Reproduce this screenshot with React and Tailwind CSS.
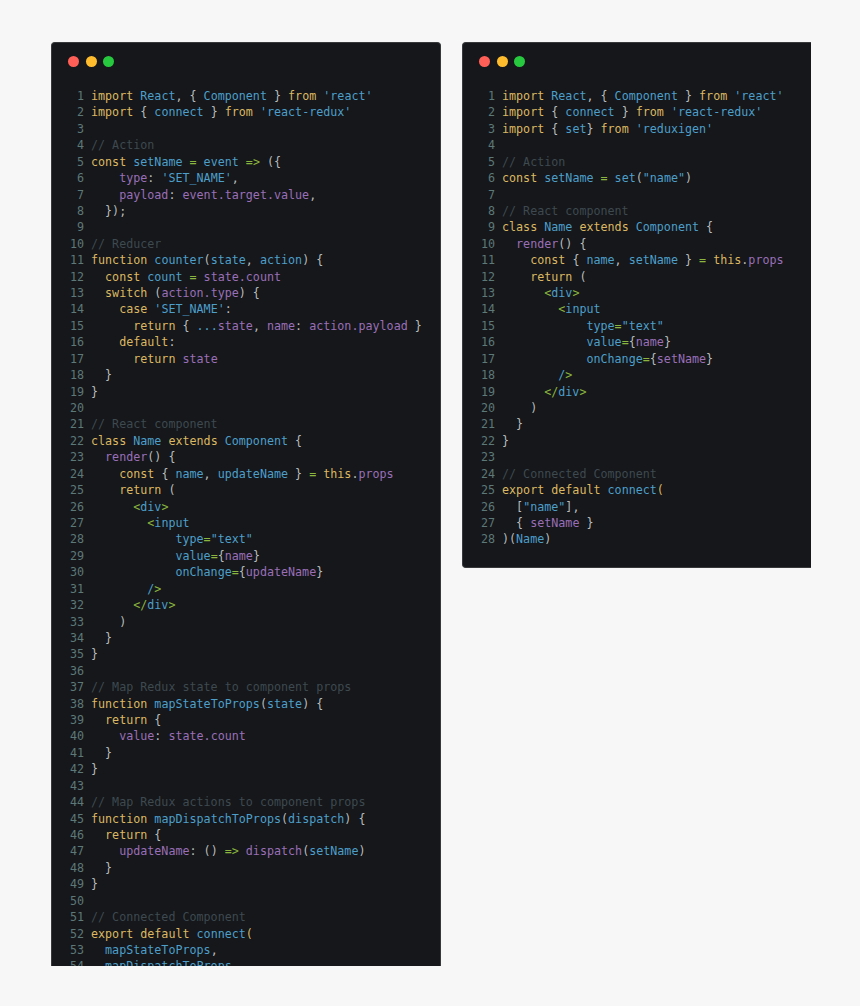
import React from 'react';

// token colours: k keyword, b blue name, v purple var, o green operator, p punctuation, c comment
const tokenClass = {
  k: 'text-[#dcb862]',
  b: 'text-[#4d9fca]',
  v: 'text-[#9a6fb8]',
  o: 'text-[#8ab53e]',
  p: 'text-[#b9bdbf]',
  c: 'text-[#3e4950]',
};

const leftCode = [
  "k|import |b|React|p|, { |b|Component|p| } |k|from |b|'react'",
  "k|import |p|{ |b|connect|p| } |k|from |b|'react-redux'",
  "",
  "c|// Action",
  "k|const |b|setName |o|= |b|event |o|=> |p|({",
  "v|    type|p|: |b|'SET_NAME'|p|,",
  "v|    payload|p|: |v|event.target.value|p|,",
  "p|  });",
  "",
  "c|// Reducer",
  "k|function |b|counter|p|(|b|state|p|, |b|action|p|) {",
  "k|  const |b|count |o|= |v|state.count",
  "k|  switch |p|(|v|action.type|p|) {",
  "k|    case |b|'SET_NAME'|p|:",
  "k|      return |p|{ |b|...|v|state|p|, |v|name|p|: |v|action.payload |p|}",
  "k|    default|p|:",
  "k|      return |v|state",
  "p|  }",
  "p|}",
  "",
  "c|// React component",
  "k|class |b|Name |k|extends |b|Component |p|{",
  "v|  render|p|() {",
  "k|    const |p|{ |b|name|p|, |b|updateName |p|} |o|= |k|this|p|.|v|props",
  "k|    return |p|(",
  "o|      <|b|div|o|>",
  "o|        <|b|input",
  "b|            type|o|=|b|\"text\"",
  "b|            value|o|=|p|{|v|name|p|}",
  "b|            onChange|o|=|p|{|v|updateName|p|}",
  "b|        /|o|>",
  "o|      </|b|div|o|>",
  "p|    )",
  "p|  }",
  "p|}",
  "",
  "c|// Map Redux state to component props",
  "k|function |b|mapStateToProps|p|(|b|state|p|) {",
  "k|  return |p|{",
  "v|    value|p|: |v|state.count",
  "p|  }",
  "p|}",
  "",
  "c|// Map Redux actions to component props",
  "k|function |b|mapDispatchToProps|p|(|b|dispatch|p|) {",
  "k|  return |p|{",
  "v|    updateName|p|: () |o|=> |v|dispatch|p|(|b|setName|p|)",
  "p|  }",
  "p|}",
  "",
  "c|// Connected Component",
  "k|export default |b|connect|k|(",
  "b|  mapStateToProps|p|,",
  "b|  mapDispatchToProps",
];

const rightCode = [
  "k|import |b|React|p|, { |b|Component|p| } |k|from |b|'react'",
  "k|import |p|{ |b|connect|p| } |k|from |b|'react-redux'",
  "k|import |p|{ |b|set|p|} |k|from |b|'reduxigen'",
  "",
  "c|// Action",
  "k|const |b|setName |o|= |b|set|p|(|b|\"name\"|p|)",
  "",
  "c|// React component",
  "k|class |b|Name |k|extends |b|Component |p|{",
  "v|  render|p|() {",
  "k|    const |p|{ |b|name|p|, |b|setName |p|} |o|= |k|this|p|.|v|props",
  "k|    return |p|(",
  "o|      <|b|div|o|>",
  "o|        <|b|input",
  "b|            type|o|=|b|\"text\"",
  "b|            value|o|=|p|{|v|name|p|}",
  "b|            onChange|o|=|p|{|v|setName|p|}",
  "b|        /|o|>",
  "o|      </|b|div|o|>",
  "p|    )",
  "p|  }",
  "p|}",
  "",
  "c|// Connected Component",
  "k|export default |b|connect|k|(",
  "p|  [|b|\"name\"|p|],",
  "p|  { |v|setName |p|}",
  "p|)(|b|Name|p|)",
];

const CodeLine = ({ num, source }) => {
  const parts = source ? source.split('|') : [];
  const tokens = [];
  for (let i = 0; i < parts.length; i += 2) {
    tokens.push(<span key={i} className={tokenClass[parts[i]]}>{parts[i + 1]}</span>);
  }
  return (
    <div className="flex h-[16.43px] leading-[16.43px] whitespace-pre">
      <span className="w-[14px] mr-[7px] shrink-0 text-right text-[#5d7878]">{num}</span>
      <span>{tokens}</span>
    </div>
  );
};

const CodeWindow = ({ lines, className }) => (
  <div className={`bg-[#15171a] border-[#37393b] overflow-hidden shrink-0 font-['DejaVu_Sans_Mono',monospace] text-[11.7px] ${className}`}>
    {/* Window buttons */}
    <div className="flex gap-[6.5px] pl-[16px] pt-[13px] pb-[21px]">
      <span className="w-[11px] h-[11px] rounded-full bg-[#ff5f56]" />
      <span className="w-[11px] h-[11px] rounded-full bg-[#ffbd2e]" />
      <span className="w-[11px] h-[11px] rounded-full bg-[#27c93f]" />
    </div>
    <div className="pl-[18px]">
      {lines.map((source, idx) => (
        <CodeLine key={idx} num={idx + 1} source={source} />
      ))}
    </div>
  </div>
);

const App = () => {
  return (
    <div className="h-[1006px] bg-[#f7f7f7] flex items-start gap-[21px] pl-[51px] pt-[42px] overflow-hidden">
      <CodeWindow lines={leftCode} className="w-[390px] h-[924px] rounded-t-[4px] border-t border-x" />
      <CodeWindow lines={rightCode} className="w-[349px] h-[526px] rounded-l-[4px] border-y border-l" />
    </div>
  );
};

export default App;
